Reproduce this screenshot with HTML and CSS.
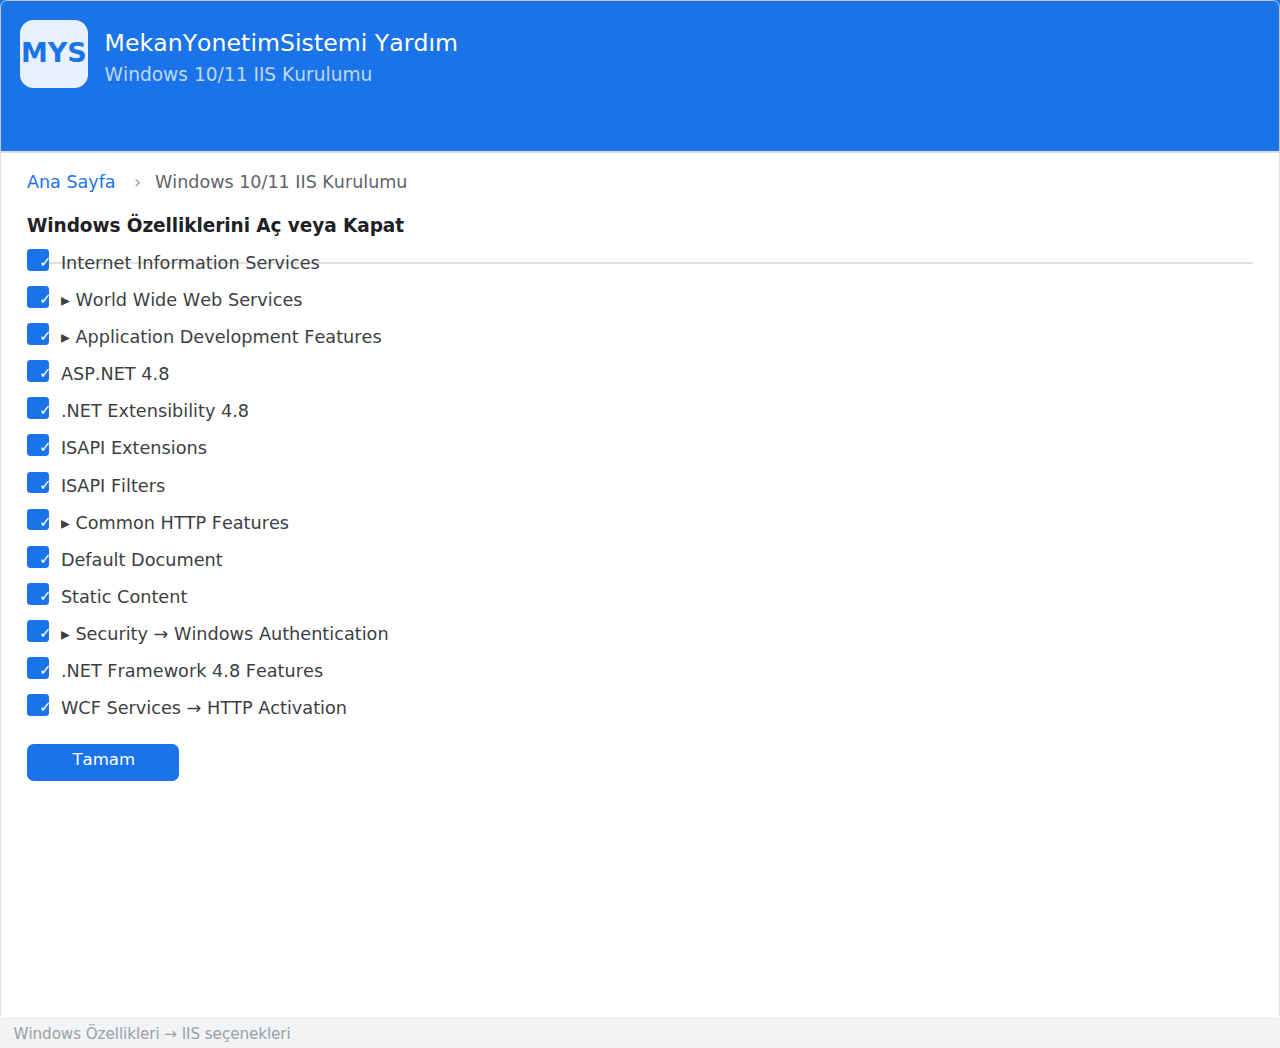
FILE: index.html
```html
<!DOCTYPE html>
<html lang="tr">
<head>
    <meta charset="UTF-8">
    <meta name="viewport" content="width=device-width, initial-scale=1.0">
    <title>MekanYonetimSistemi Yardım</title>
    <link rel="stylesheet" href="styles.css">
</head>
<body>

<div class="window">
    <header class="header">
        <div class="logo">MYS</div>
        <div class="header-text">
            <h1>MekanYonetimSistemi Yardım</h1>
            <p>Windows 10/11 IIS Kurulumu</p>
        </div>
    </header>

    <main class="content">
        <nav class="breadcrumb">
            <a href="#">Ana Sayfa</a>
            <span class="separator">›</span>
            <span>Windows 10/11 IIS Kurulumu</span>
        </nav>

        <h2>Windows Özelliklerini Aç veya Kapat</h2>

        <ul class="features">
            <li><span class="check">✓</span><span>Internet Information Services</span></li>
            <li><span class="check">✓</span><span>▸ World Wide Web Services</span></li>
            <li><span class="check">✓</span><span>▸ Application Development Features</span></li>
            <li><span class="check">✓</span><span>ASP.NET 4.8</span></li>
            <li><span class="check">✓</span><span>.NET Extensibility 4.8</span></li>
            <li><span class="check">✓</span><span>ISAPI Extensions</span></li>
            <li><span class="check">✓</span><span>ISAPI Filters</span></li>
            <li><span class="check">✓</span><span>▸ Common HTTP Features</span></li>
            <li><span class="check">✓</span><span>Default Document</span></li>
            <li><span class="check">✓</span><span>Static Content</span></li>
            <li><span class="check">✓</span><span>▸ Security → Windows Authentication</span></li>
            <li><span class="check">✓</span><span>.NET Framework 4.8 Features</span></li>
            <li><span class="check">✓</span><span>WCF Services → HTTP Activation</span></li>
        </ul>

        <button class="ok-button">Tamam</button>
    </main>

    <footer class="footer">Windows Özellikleri → IIS seçenekleri</footer>
</div>

</body>
</html>
```
FILE: styles.css
```css
* {
    margin: 0;
    padding: 0;
    box-sizing: border-box;
}

body {
    font-family: "DejaVu Sans", sans-serif;
    font-kerning: none;
    background: #fff;
    color: #3c4043;
    height: 1048px;
    overflow: hidden;
}

.window {
    position: relative;
    height: 1048px;
    display: flex;
    flex-direction: column;
}

/* Window frame, drawn over the header */
.window::after {
    content: "";
    position: absolute;
    inset: 0;
    border: 1px solid #dadce0;
    border-radius: 7px;
    opacity: 0.85;
    pointer-events: none;
}

.header {
    height: 153px;
    padding: 20.2px;
    display: flex;
    align-items: flex-start;
    gap: 17px;
    background: #1a73e8;
    border-bottom: 2px solid #dadce0;
}

.logo {
    width: 67.4px;
    height: 67.4px;
    border-radius: 13.5px;
    background: #e8f0fe;
    color: #1a73e8;
    font-size: 27px;
    font-weight: bold;
    line-height: 65px;
    display: flex;
    justify-content: center;
}

.header-text {
    padding-top: 8px;
}

.header h1 {
    font-size: 23.6px;
    font-weight: normal;
    line-height: 30px;
    letter-spacing: 0.03px;
    color: #fff;
}

.header p {
    font-size: 18.6px;
    line-height: 24px;
    margin-top: 5px;
    color: #bfd8f9;
}

.content {
    flex: 1;
    padding: 17px 27px 0;
}

.breadcrumb {
    display: flex;
    font-size: 17.55px;
    line-height: 25px;
    color: #5f6368;
}

.breadcrumb a {
    width: 107px;
    color: #1a73e8;
    text-decoration: none;
}

.breadcrumb .separator {
    width: 21px;
    color: #9aa0a6;
}

.content h2 {
    margin-top: 18px;
    font-size: 18.53px;
    line-height: 26px;
    letter-spacing: -0.09px;
    color: #202124;
}

.features {
    position: relative;
    list-style: none;
    margin-top: 10.25px;
}

/* Divider running behind the first row */
.features::before {
    content: "";
    position: absolute;
    top: 13px;
    left: 0;
    right: 0;
    height: 2px;
    background: #e0e0e0;
}

.features li {
    position: relative;
    height: 37.05px;
    display: flex;
    gap: 12px;
    font-size: 17.68px;
    line-height: 28px;
}

.check {
    width: 21.9px;
    height: 21.9px;
    padding-left: 12px;
    border-radius: 3.4px;
    background: #1a73e8;
    color: #fff;
    font-size: 15.2px;
    line-height: 26px;
}

.ok-button {
    display: block;
    width: 151.6px;
    height: 37px;
    margin-top: 13.5px;
    padding: 0 0 6px 2px;
    border: none;
    border-radius: 6.7px;
    background: #1a73e8;
    color: #fff;
    font-family: inherit;
    font-kerning: none;
    font-size: 16.6px;
}

.footer {
    position: relative;
    z-index: 1;
    height: 30.7px;
    padding-left: 13.5px;
    background: #f1f3f4;
    color: #9aa0a6;
    font-size: 15.16px;
    line-height: 34px;
    letter-spacing: -0.07px;
}
```
